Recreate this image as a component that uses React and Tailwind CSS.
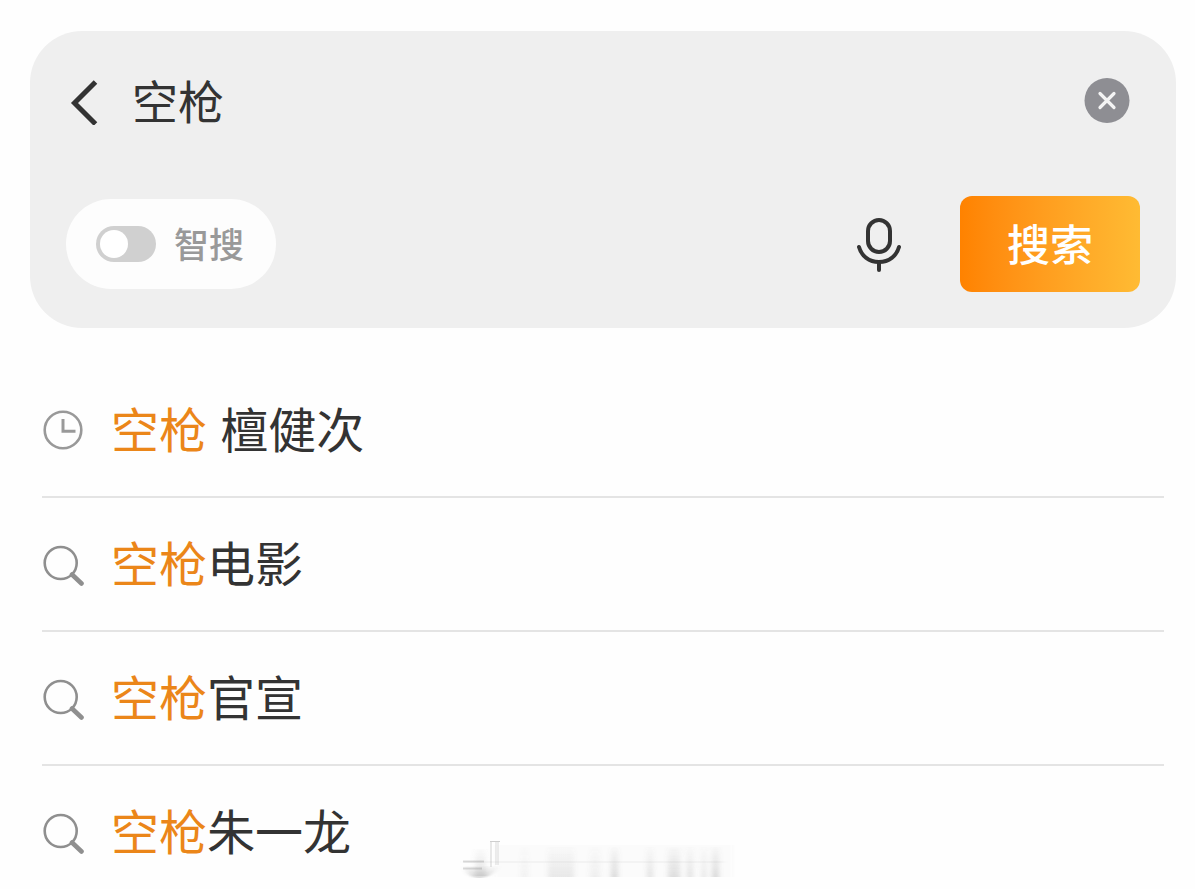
import React, { useState } from "react";

const suggestions = [
  { id: 1, keyword: "空枪", rest: " 檀健次", type: "history" },
  { id: 2, keyword: "空枪", rest: "电影", type: "search" },
  { id: 3, keyword: "空枪", rest: "官宣", type: "search" },
  { id: 4, keyword: "空枪", rest: "朱一龙", type: "search" },
];

function BackIcon() {
  return (
    <svg className="w-9 h-12" viewBox="0 0 36 48" fill="none" stroke="#333333" strokeWidth="5" strokeLinejoin="miter">
      <path d="M29.5 5 L8.500 26 L29.500 47" />
    </svg>
  );
}

function ClearIcon() {
  return (
    <svg className="w-[46px] h-[46px]" viewBox="0 0 46 46" fill="none">
      <circle cx="23" cy="22.500" r="22.5" fill="#8e8e93" />
      <path d="M16 15.500 L30 29.500 M30 15.500 L16 29.500" stroke="#f4f4f4" strokeWidth="3.2" strokeLinecap="round" />
    </svg>
  );
}

function MicIcon() {
  return (
    <svg className="w-12 h-[60px]" viewBox="0 0 48 60" fill="none" stroke="#333333" strokeWidth="4" strokeLinecap="round">
      <rect x="14" y="6" width="22" height="32" rx="11" />
      <path d="M5 33 C7.500 42 15 48 25 48 C35 48 42.500 42 45 33" />
      <path d="M25 48 V56" />
    </svg>
  );
}

function HistoryIcon() {
  return (
    <svg className="w-11 h-11 shrink-0" viewBox="0 0 44 44" fill="none" stroke="#999999">
      <circle cx="21" cy="22" r="18.300" strokeWidth="2.600" />
      <path d="M21 11 V23.300 H33.500" strokeWidth="3" />
    </svg>
  );
}

function SearchIcon() {
  return (
    <svg className="w-11 h-11 shrink-0" viewBox="0 0 44 44" fill="none" stroke="#8f8f8f">
      <circle cx="18.700" cy="21" r="16" strokeWidth="2.600" />
      <path d="M30 32.500 L39.500 41.500" strokeWidth="4.600" strokeLinecap="round" />
    </svg>
  );
}

// Faded mark at the bottom of the page
function FadedMark() {
  const bars = [
    [61, 7, 0.07],
    [88, 26, 0.14],
    [130, 10, 0.09],
    [151, 7, 0.25],
    [187, 6, 0.18],
    [208, 12, 0.22],
    [227, 6, 0.18],
    [242, 4, 0.17],
    [252, 7, 0.26],
  ];

  return (
    <svg className="w-[280px] h-[44px]" viewBox="0 0 280 44" aria-hidden="true">
      <defs>
        <linearGradient id="fade" x1="0" y1="0" x2="0" y2="1">
          <stop offset="0" stopColor="#777777" stopOpacity="0.1" />
          <stop offset="1" stopColor="#777777" stopOpacity="1" />
        </linearGradient>
        <filter id="soft" x="-10%" y="-10%" width="120%" height="120%">
          <feGaussianBlur stdDeviation="2.5 0.6" />
        </filter>
      </defs>
      <g filter="url(#soft)">
        {bars.map(([x, width, opacity]) => (
          <rect key={x} x={x} y="8" width={width} height="30" fill="url(#fade)" opacity={opacity} />
        ))}
        <rect x="36" y="6" width="236" height="32" fill="#777777" opacity="0.025" />
        <rect x="15" y="10" width="11" height="27" fill="url(#fade)" opacity="0.2" />
        <path d="M4 27 H38 C34 35 28 39 19 39 C11 39 6 35 4 27 Z" fill="url(#fade)" opacity="0.28" />
        <path d="M4 23 H264" stroke="#999999" strokeWidth="1.500" opacity="0.1" />
      </g>
      <path d="M3 22.500 H24 M3 29.500 H22" stroke="#777777" strokeWidth="2" opacity="0.25" />
      <path d="M30 2.500 H40" stroke="#888888" opacity="0.4" />
      <path d="M31 3 V28" stroke="#888888" strokeWidth="1.500" opacity="0.25" />
      <path d="M37 3 V26" stroke="#888888" strokeWidth="4" opacity="0.14" />
    </svg>
  );
}

function App() {
  const [query, setQuery] = useState("空枪");
  const [smart, setSmart] = useState(false);

  return (
    <div className="relative min-h-screen bg-[#fefefe] pl-[30px] pr-[19px] pt-[31px] text-[#333333] font-['Liberation_Sans','Noto_Sans_CJK_SC',sans-serif]">
      {/* Search panel */}
      <form
        className="rounded-[52px] bg-[#efefef] px-9 pt-8 pb-9"
        onSubmit={(e) => e.preventDefault()}
      >
        <div className="flex items-center h-[76px]">
          <button type="button" aria-label="返回">
            <BackIcon />
          </button>
          <input
            type="text"
            aria-label="搜索内容"
            value={query}
            onChange={(e) => setQuery(e.target.value)}
            className="ml-[30px] flex-1 min-w-0 pt-1 bg-transparent text-[46px] leading-[68px] outline-none"
          />
          <button type="button" aria-label="清除" className="mr-2.5" onClick={() => setQuery("")}>
            <ClearIcon />
          </button>
        </div>

        <div className="mt-[57px] flex items-center">
          <label className="flex items-center h-[90px] pl-[30px] pr-8 rounded-full bg-[#fdfdfd] cursor-pointer">
            <input
              type="checkbox"
              role="switch"
              checked={smart}
              onChange={(e) => setSmart(e.target.checked)}
              className="peer sr-only"
            />
            <span className="flex items-center w-[60px] h-9 px-1 rounded-full bg-[#d0d0d0] peer-checked:bg-[#ff8200] peer-checked:justify-end">
              <span className="w-7 h-7 rounded-full bg-white" />
            </span>
            <span className="ml-[18px] pt-1 text-[35px] leading-[52px] font-medium text-[#999999]">智搜</span>
          </label>

          <button type="button" aria-label="语音输入" className="ml-auto">
            <MicIcon />
          </button>
          <button
            type="submit"
            className="ml-[58px] w-[180px] h-24 pt-1 rounded-xl bg-linear-to-r from-[#ff8200] to-[#ffbb33] text-[43px] leading-[64px] font-medium text-white"
          >
            搜索
          </button>
        </div>
      </form>

      {/* Suggestions */}
      <ul className="mt-9 px-3">
        {suggestions.map((item) => (
          <li key={item.id} className="border-b-2 border-[#e4e4e4] last:border-b-0">
            <a href="#" className="flex items-center h-[132px]">
              {item.type === "history" ? <HistoryIcon /> : <SearchIcon />}
              <span className="ml-[25px] pt-1 text-[48px] leading-[72px] whitespace-pre">
                <span className="text-[#eb8619]">{item.keyword}</span>
                {item.rest}
              </span>
            </a>
          </li>
        ))}
      </ul>

      <div className="absolute left-[460px] top-[839px] pointer-events-none">
        <FadedMark />
      </div>
    </div>
  );
}

export default App;
